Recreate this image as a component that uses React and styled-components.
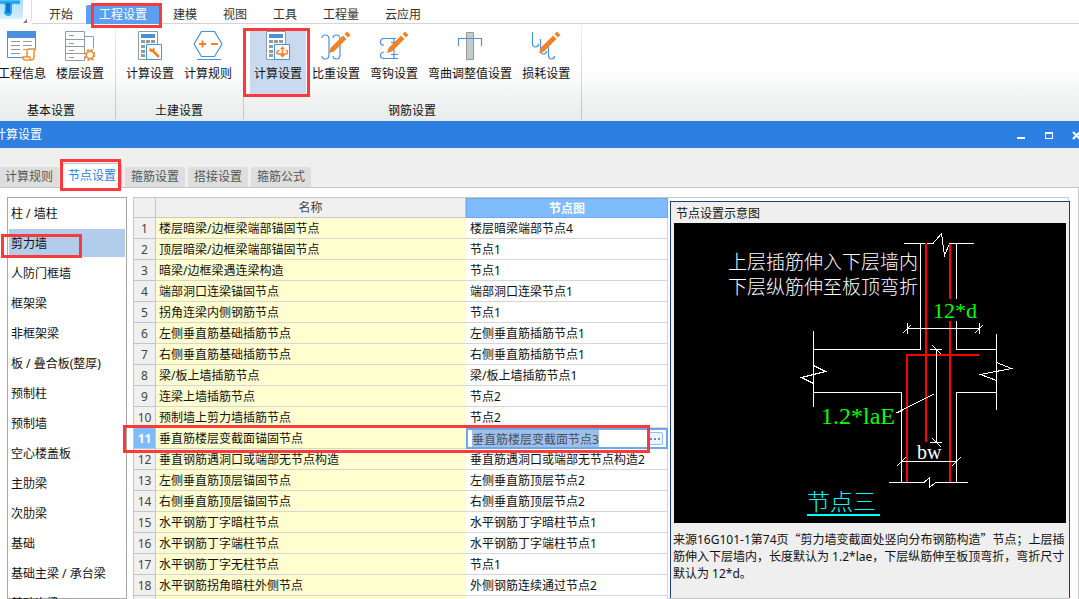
import React, { useEffect, useRef } from "react";
import styled, { createGlobalStyle, css } from "styled-components";

const Color = {
  blue: "#2d7fe1",
  tabBlue: "#5b9ff0",
  iconBlue: "#4a90dc",
  headBlue: "#80bbfb",
  headLine: "#6ba9e8",
  orange: "#f08228",
  grey: "#8f9ba0",
  line: "#c6c6c6",
  cellLine: "#d6d6d6",
  panel: "#efefef",
  red: "#fb3b3b",
  text: "#111",
};

const GlobalStyle = createGlobalStyle`
  * { box-sizing: border-box; }
  body {
    margin: 0;
    background: #fff;
    color: ${Color.text};
    font: 12px/16px "Noto Sans", "Noto Sans CJK SC", sans-serif;
  }
  button, input {
    margin: 0;
    padding: 0;
    border: 0;
    background: none;
    color: inherit;
    font: inherit;
  }
`;

const Shell = styled.div`
  display: flex;
  flex-direction: column;
  height: 100vh;
  overflow: hidden;
`;

/* red frame drawn around a step of the tutorial */
const Mark = styled.span`
  position: absolute;
  z-index: 3;
  top: ${(p) => p.$top}px;
  left: ${(p) => p.$left}px;
  width: ${(p) => p.$width}px;
  height: ${(p) => p.$height}px;
  border: 3px solid ${Color.red};
  pointer-events: none;
`;

/* ---------- ribbon ---------- */

const MenuBar = styled.div`
  display: flex;
  flex: none;
  height: 24px;
`;

const Logo = styled.div`
  flex: none;
  width: 32px;
  height: 24px;
  border-right: 1px solid #dcdcdc;
  border-bottom-right-radius: 6px;
`;

const MenuTabs = styled.nav`
  display: flex;
  flex: 1;
  padding-left: 4px;
  border-bottom: 1px solid #d3d6d8;
`;

const MenuTab = styled.button`
  position: relative;
  height: 19px;
  margin-top: 5px;
  padding: 0 13px;
  border-radius: 2px 2px 0 0;
  color: #333;
  line-height: 19px;
  ${(p) =>
    p.$active &&
    css`
      background: ${Color.tabBlue};
      color: #fff;
    `}
`;

const Ribbon = styled.div`
  display: flex;
  flex: none;
  height: 97px;
  padding: 2px 0;
  margin-left: -12px;
  background: linear-gradient(#fff 45%, #e7ebeb);
`;

const RibbonGroup = styled.section`
  display: flex;
  flex-direction: column;
  justify-content: space-between;
  padding: 5px 6px 0 5px;
  border-right: 1px solid;
  border-image: linear-gradient(#eee, #bfc2c4) 1;
`;

const RibbonRow = styled.div`
  display: flex;
`;

const GroupTitle = styled.h2`
  margin: 0;
  font-size: 12px;
  font-weight: 400;
  line-height: 16px;
  text-align: center;
`;

const Tool = styled.button`
  position: relative;
  display: flex;
  flex-direction: column;
  align-items: center;
  gap: 5px;
  height: 63px;
  padding: ${(p) => (p.$active ? "0 4px" : "0 5px")};
  border: solid transparent;
  border-width: ${(p) => (p.$active ? "0 1px" : "0")};
  background: ${(p) => (p.$active ? "#c9d9f0" : "none")};
  background-clip: padding-box;
  white-space: nowrap;

  svg {
    display: block;
    width: 30px;
    height: 30px;
  }
`;

function LogoIcon() {
  return (
    <svg width="31" height="24" viewBox="0 0 31 24">
      <defs>
        <linearGradient id="logoBg" x1="0" y1="0" x2="0" y2="1">
          <stop offset="0" stopColor="#a9dcf8" />
          <stop offset="1" stopColor="#d9f1fd" />
        </linearGradient>
      </defs>
      <path d="M0 0h23v17q0 2-2 2H0z" fill="url(#logoBg)" />
      <path
        d="M0 0h20v3q-1 2-3 1q-4-1-5 1v7q0 3-3 4q-4 0-5-3q1-3 1-8q-1-2-5-1z"
        fill="#2aa5ec"
      />
      <path d="M6 3h4v10H6z" fill="#1173d2" />
      <path d="M0 0h20v1H0z" fill="#4cc6f7" />
      <path d="M27 19v4h-4z" fill="#777" />
    </svg>
  );
}

function InfoIcon() {
  return (
    <svg viewBox="0 0 30 30" fill="none">
      <path d="M.5 .5h28v17M.5 .5v26h16" stroke={Color.iconBlue} />
      <path d="M0 0h29v7H0z" fill={Color.iconBlue} />
      <path
        d="M4 10.500h9M16 10.500h9M4 14.500h9M16 14.500h9M4 18.500h9M4 22.500h9M16 18.500h3"
        stroke={Color.grey}
      />
      <path
        d="M20 26V20q0-2 2-2h7q-2 1-2 3v5q0 3-3 3h-6q-2 0-2-3h7q0 3 2 3"
        fill="#fff"
        stroke="#e8943a"
        strokeWidth="1.500"
      />
    </svg>
  );
}

function FloorIcon() {
  return (
    <svg viewBox="0 0 30 30" fill="none">
      <path
        d="M.5 .5h19v29H.5zM.5 8.500h19M.5 15.500h19M.5 22.500h19M19.500 5.500h9v12M4 4.500h5M4 12.500h5M4 19.500h5M4 26.500h5"
        stroke={Color.grey}
      />
      <circle cx="25" cy="24" r="6" fill="#fff" />
      <circle
        cx="25"
        cy="24"
        r="5"
        stroke="#e8943a"
        strokeWidth="2"
        strokeDasharray="2.400 1.527"
      />
      <circle cx="25" cy="24" r="3.600" stroke="#e8943a" strokeWidth="1.600" />
    </svg>
  );
}

function CalculatorIcon({ children }) {
  return (
    <svg viewBox="0 0 30 30" fill="none">
      <path d="M3.500 .5h19v28h-19z" fill="#fff" stroke={Color.grey} />
      <path d="M6 3h14v4H6z" fill={Color.iconBlue} />
      <path
        d="M6 9h4v3H6zM11 9h4v3h-4zM16 9h4v3h-4zM6 14h4v3H6zM11 14h4v3h-4zM6 19h4v3H6zM6 23h4v3H6z"
        fill={Color.grey}
      />
      <path d="M11.500 13.500h15v15h-15z" fill="#fff" stroke={Color.iconBlue} />
      {children}
    </svg>
  );
}

function Wrench() {
  return (
    <>
      <path d="M17 19l7 7" stroke={Color.orange} strokeWidth="2.500" />
      <path
        d="M15 16.500l2 2 2-2q1.500 2 0 3.500t-4 .5q-1.500-2 0-4"
        fill={Color.orange}
      />
    </>
  );
}

function RebarSign() {
  return (
    <path
      d="M19.500 15.500v11M17.500 17.500h4M17.500 24.500h4M16.500 19.500q-2.500 0-2.500 2t2.500 1.500h6q2 0 2-2t-2-1.500"
      stroke={Color.orange}
      strokeWidth="1.500"
    />
  );
}

function RuleIcon() {
  return (
    <svg viewBox="0 0 30 30" fill="none">
      <path
        d="M8.500 .5h13l7.500 12.500-7.500 12.500h-13L1 13zM4 28.500h24"
        stroke={Color.iconBlue}
        strokeWidth="1.200"
      />
      <path d="M6 13h7M9.500 9.500v7M18 13h7" stroke={Color.orange} strokeWidth="2" />
    </svg>
  );
}

function Pencil() {
  return (
    <>
      <path d="M8 22l1.500-5L22 4.500l3.500 3.500L13 20.500z" fill={Color.orange} />
      <path d="M23.500 3l2.500-2.500 3.500 3.500L27 6.500z" fill={Color.orange} />
    </>
  );
}

function WeightIcon() {
  return (
    <svg viewBox="0 0 30 30" fill="none">
      <path
        d="M1 7q0-3 3.500-3t3.500 4v16q0 4-3.500 4T1 25M12 7q0-3 3.500-3t3.500 4v16q0 4-3.500 4T12 25"
        stroke={Color.iconBlue}
        strokeWidth="1.200"
      />
      <Pencil />
    </svg>
  );
}

function HookIcon() {
  return (
    <svg viewBox="0 0 30 30" fill="none">
      <path
        d="M17 7.500H5q-3.500 0-3.500 3.500T5 14M19 27.500H5q-3.500 0-3.500-3T5 21M10 27.500h9M15 8v19M12 11.500h7M12 23.500h7"
        stroke={Color.iconBlue}
        strokeWidth="1.200"
      />
      <Pencil />
    </svg>
  );
}

function BendIcon() {
  return (
    <svg viewBox="0 0 30 30" fill="none">
      <path d="M11.500 1.500h7v27h-7z" fill="#c3c9cc" stroke={Color.grey} />
      <path d="M3.500 15V7.500h23V15" stroke={Color.iconBlue} strokeWidth="1.200" />
    </svg>
  );
}

function LossIcon() {
  return (
    <svg viewBox="0 0 30 30" fill="none">
      <path
        d="M1.500 1v11q0 4 3 4t3-3M9.500 8v11q0 4 3 4t3-3M17.500 16v8q0 4 3 4t3-3"
        stroke={Color.iconBlue}
        strokeWidth="1.200"
      />
      <Pencil />
    </svg>
  );
}

/* ---------- dialog ---------- */

const TitleBar = styled.header`
  display: flex;
  flex: none;
  align-items: center;
  justify-content: space-between;
  height: 27px;
  background: ${Color.blue};
  color: #fff;
`;

const DialogTitle = styled.h1`
  margin: 0 0 0 -6px;
  font-size: 12px;
  font-weight: 400;
  line-height: 16px;
`;

const WindowButtons = styled.div`
  display: flex;
  gap: 12px;
  margin-right: -6px;

  button {
    width: 16px;
    height: 17px;
  }
  svg {
    display: block;
  }
`;

const DialogTabs = styled.nav`
  display: flex;
  flex: none;
  align-items: flex-end;
  gap: 3px;
  height: 40px;
  padding-right: 8px;
  border-bottom: 1px solid ${Color.line};
  background: ${Color.panel};
`;

const DialogTab = styled.button`
  position: relative;
  width: 60px;
  height: 20px;
  border-radius: 3px 3px 0 0;
  background: #dedede;
  color: #555;
  line-height: 20px;

  &:first-child {
    margin-left: -1px;
  }
  ${(p) =>
    p.$active &&
    css`
      height: 25px;
      margin-bottom: -1px;
      border: 1px solid ${Color.line};
      border-bottom: 0;
      background: #fff;
      color: ${Color.blue};
      line-height: 24px;
    `}
`;

const DialogBody = styled.main`
  display: flex;
  flex: 1;
  gap: 6px;
  min-height: 0;
  padding: 9px 9px 0 7px;
  border-right: 1px solid ${Color.line};
`;

const PartList = styled.ul`
  flex: none;
  width: 120px;
  margin: 0;
  padding: 1px;
  list-style: none;
  border: 1px solid #a9a9a9;
`;

const PartItem = styled.li`
  position: relative;
  height: 28px;
  margin-bottom: 2px;
  background: ${(p) => (p.$active ? "#b2ccec" : "none")};

  button {
    display: block;
    width: 100%;
    padding-left: 2px;
    line-height: 30px;
    text-align: left;
    white-space: nowrap;
  }
`;

const Frame = styled.div`
  display: flex;
  flex: 1;
  align-items: flex-start;
  gap: 2px;
  min-width: 0;
  border: 1px solid ${Color.line};
`;

const NodeTable = styled.table`
  flex: 1;
  width: 0;
  table-layout: fixed;
  border-collapse: separate;
  border-spacing: 0;

  .numberCol {
    width: 22px;
  }
  .nodeCol {
    width: 202px;
  }
`;

const HeadCell = styled.th`
  height: 20px;
  padding: 1px 0 0;
  border-right: 1px solid ${Color.line};
  border-bottom: 1px solid ${Color.line};
  background: #f0f0f0;
  color: #444;
  font-weight: 400;
  ${(p) =>
    p.$active &&
    css`
      border: 1px solid ${Color.headLine};
      background: ${Color.headBlue};
      color: #fff;
      font-weight: 700;
    `}
`;

const NumberCell = styled.th`
  position: relative;
  height: 21px;
  padding: 2px 0 0;
  border-right: 1px solid ${Color.line};
  border-bottom: 1px solid ${Color.line};
  background: ${(p) => (p.$active ? Color.headBlue : "#f0f0f0")};
  color: ${(p) => (p.$active ? "#fff" : "#444")};
  font-weight: ${(p) => (p.$active ? 700 : 400)};
`;

const Cell = styled.td`
  height: 21px;
  padding: 2px 3px 0;
  border-bottom: 1px solid ${Color.cellLine};
  border-right: ${(p) => (p.$yellow ? "0" : `1px solid ${Color.cellLine}`)};
  background: ${(p) => (p.$yellow ? "#ffffcf" : "#fff")};
  overflow: hidden;
  white-space: nowrap;
  ${(p) => !p.$yellow && "padding-left: 4px;"}
  ${(p) => p.$editing && "padding: 0; border: 0;"}
`;

const Editor = styled.div`
  display: flex;
  align-items: center;
  height: 21px;
  padding: 0 3px 0 4px;
  border: 2px solid ${Color.headLine};

  input {
    flex: 1;
    min-width: 0;
    height: 17px;
    color: #4a4f58;
    outline: 0;
  }
  input::selection {
    background: #9dc0ea;
    color: #4a4f58;
  }
  button {
    display: flex;
    align-items: center;
    justify-content: center;
    width: 16px;
    height: 13px;
    border: 1px solid #8fbdf0;
    border-radius: 2px;
    background: #eef5fd;
  }
`;

const Preview = styled.aside`
  flex: none;
  align-self: stretch;
  width: 400px;
  margin: 3px -2px 0 0;
  padding: 4px 2px 0;
  border: 1px solid #1c3f7c;
  border-bottom: 0;
  background: ${Color.panel};

  h3 {
    margin: 0;
    padding: 0 3px 1px;
    font-size: 12px;
    font-weight: 400;
    line-height: 16px;
  }
  svg {
    display: block;
    margin-left: 1px;
    background: #000;
  }
  p {
    margin: 7px 0 0;
    line-height: 17px;
    white-space: nowrap;
  }
  q {
    quotes: none;
    font-family: "Noto Sans CJK SC", sans-serif;
  }
`;

function NodeDrawing() {
  return (
    <svg
      width="392"
      height="300"
      viewBox="674 223 392 300"
      fill="none"
      fontFamily='"Liberation Serif", "Noto Sans CJK SC", serif'
    >
      <g stroke="#fff" shapeRendering="crispEdges">
        <path d="M904 243.500H933M949 243.500H974" />
        <path d="M933 243.500L941.500 233.500L944.500 255.500L949.500 243.500" />
        <path d="M920.500 243V349.500H813.500M956.500 243V299M956.500 321V349.500H996.500" />
        <path d="M813.500 331V365.500L825.500 371.500L801.500 377.500L813.500 383.500V407M813.500 365V384" />
        <path d="M996.500 334V362.500L1011.500 368.500L980.500 374.500L996.500 380.500V410M996.500 362V381" />
        <path d="M813.500 392.500H901.500V482.500M996.500 392.500H956.500V482.500" />
        <path d="M889 482.500H924L929.500 477.500V487.500L935.500 482.500H968" />
      </g>
      <g stroke="#f00" strokeWidth="2" shapeRendering="crispEdges">
        <path d="M926 243V442M950 244V299M950 321V482M907 482V355H979" />
      </g>
      <g stroke="#fff" shapeRendering="crispEdges">
        <path d="M907 328.500H980M907.500 323V334M979.500 323V334" />
        <path d="M903 333L911 325M975 333L983 325" />
        <path d="M936.500 349V442M930 349.500H942M932 345L941 354M930 442.500H942M932 438L941 447" />
        <path d="M896.500 413L934 394" />
        <path d="M901 461.500H957M897 466L906 457M952 466L961 457" />
      </g>
      <path d="M807 515H880" stroke="#0ff" strokeWidth="2" />
      <g fill="#fff" fontSize="19" fontWeight="300">
        <text x="728" y="269">上层插筋伸入下层墙内</text>
        <text x="728" y="294">下层纵筋伸至板顶弯折</text>
      </g>
      <text x="933" y="318" fill="#0f0" fontSize="22">12*d</text>
      <text x="821" y="424" fill="#0f0" fontSize="24">1.2*laE</text>
      <text x="917" y="459" fill="#fff" fontSize="20">bw</text>
      <text x="807" y="510" fill="#0ff" fontSize="23" fontWeight="300">节点三</text>
    </svg>
  );
}

const menus = ["开始", "工程设置", "建模", "视图", "工具", "工程量", "云应用"];

const groups = [
  {
    title: "基本设置",
    tools: [
      ["工程信息", <InfoIcon />],
      ["楼层设置", <FloorIcon />],
    ],
  },
  {
    title: "土建设置",
    tools: [
      ["计算设置", <CalculatorIcon><Wrench /></CalculatorIcon>],
      ["计算规则", <RuleIcon />],
    ],
  },
  {
    title: "钢筋设置",
    tools: [
      ["计算设置", <CalculatorIcon><RebarSign /></CalculatorIcon>, true],
      ["比重设置", <WeightIcon />],
      ["弯钩设置", <HookIcon />],
      ["弯曲调整值设置", <BendIcon />],
      ["损耗设置", <LossIcon />],
    ],
  },
];

const dialogTabs = ["计算规则", "节点设置", "箍筋设置", "搭接设置", "箍筋公式"];

const parts = [
  "柱 / 墙柱",
  "剪力墙",
  "人防门框墙",
  "框架梁",
  "非框架梁",
  "板 / 叠合板(整厚)",
  "预制柱",
  "预制墙",
  "空心楼盖板",
  "主肋梁",
  "次肋梁",
  "基础",
  "基础主梁 / 承台梁",
  "基础次梁",
];

const rows = [
  ["楼层暗梁/边框梁端部锚固节点", "楼层暗梁端部节点4"],
  ["顶层暗梁/边框梁端部锚固节点", "节点1"],
  ["暗梁/边框梁遇连梁构造", "节点1"],
  ["端部洞口连梁锚固节点", "端部洞口连梁节点1"],
  ["拐角连梁内侧钢筋节点", "节点1"],
  ["左侧垂直筋基础插筋节点", "左侧垂直筋插筋节点1"],
  ["右侧垂直筋基础插筋节点", "右侧垂直筋插筋节点1"],
  ["梁/板上墙插筋节点", "梁/板上墙插筋节点1"],
  ["连梁上墙插筋节点", "节点2"],
  ["预制墙上剪力墙插筋节点", "节点2"],
  ["垂直筋楼层变截面锚固节点", "垂直筋楼层变截面节点3"],
  ["垂直钢筋遇洞口或端部无节点构造", "垂直筋遇洞口或端部无节点构造2"],
  ["左侧垂直筋顶层锚固节点", "左侧垂直筋顶层节点2"],
  ["右侧垂直筋顶层锚固节点", "右侧垂直筋顶层节点2"],
  ["水平钢筋丁字暗柱节点", "水平钢筋丁字暗柱节点1"],
  ["水平钢筋丁字端柱节点", "水平钢筋丁字端柱节点1"],
  ["水平钢筋丁字无柱节点", "节点1"],
  ["水平钢筋拐角暗柱外侧节点", "外侧钢筋连续通过节点2"],
  ["", ""],
];

function NodeEditor({ value }) {
  const input = useRef(null);

  useEffect(() => {
    input.current.focus({ preventScroll: true });
    input.current.select();
  }, []);

  return (
    <Editor>
      <input ref={input} aria-label="节点图" defaultValue={value} />
      <button aria-label="选择节点">
        <svg width="10" height="2" viewBox="0 0 10 2">
          <path d="M0 0h2v2H0zM4 0h2v2H4zM8 0h2v2H8z" fill="#5b8fc8" />
        </svg>
      </button>
    </Editor>
  );
}

function App() {
  return (
    <Shell>
      <GlobalStyle />
      <MenuBar>
        <Logo>
          <LogoIcon />
        </Logo>
        <MenuTabs>
          {menus.map((name) => (
            <MenuTab key={name} $active={name === "工程设置"}>
              {name}
              {name === "工程设置" && (
                <Mark $top={-2} $left={5} $width={71} $height={25} />
              )}
            </MenuTab>
          ))}
        </MenuTabs>
      </MenuBar>
      <Ribbon>
        {groups.map((group) => (
          <RibbonGroup key={group.title}>
            <RibbonRow>
              {group.tools.map(([name, icon, active]) => (
                <Tool key={name} $active={active}>
                  {icon}
                  {name}
                  {active && (
                    <Mark $top={-3} $left={-7} $width={67} $height={69} />
                  )}
                </Tool>
              ))}
            </RibbonRow>
            <GroupTitle>{group.title}</GroupTitle>
          </RibbonGroup>
        ))}
      </Ribbon>

      <TitleBar>
        <DialogTitle>计算设置</DialogTitle>
        <WindowButtons>
          <button aria-label="最小化">
            <svg width="16" height="16">
              <path d="M4 10h8v2H4z" fill="#fff" />
            </svg>
          </button>
          <button aria-label="最大化">
            <svg width="16" height="16">
              <path d="M4 5h8v7H4zM5 7v4h6V7z" fill="#fff" fillRule="evenodd" />
            </svg>
          </button>
          <button aria-label="关闭">
            <svg width="16" height="16">
              <path d="M4 5l7 7M11 5l-7 7" stroke="#fff" strokeWidth="2" />
            </svg>
          </button>
        </WindowButtons>
      </TitleBar>
      <DialogTabs>
        {dialogTabs.map((name) => (
          <DialogTab key={name} $active={name === "节点设置"}>
            {name}
            {name === "节点设置" && (
              <Mark $top={-5} $left={-3} $width={61} $height={32} />
            )}
          </DialogTab>
        ))}
      </DialogTabs>
      <DialogBody>
        <PartList>
          {parts.map((name) => (
            <PartItem key={name} $active={name === "剪力墙"}>
              <button>{name}</button>
              {name === "剪力墙" && (
                <Mark $top={5} $left={-8} $width={81} $height={24} />
              )}
            </PartItem>
          ))}
        </PartList>
        <Frame>
          <NodeTable>
            <colgroup>
              <col className="numberCol" />
              <col />
              <col className="nodeCol" />
            </colgroup>
            <thead>
              <tr>
                <HeadCell />
                <HeadCell>名称</HeadCell>
                <HeadCell $active>节点图</HeadCell>
              </tr>
            </thead>
            <tbody>
              {rows.map(([name, node], i) => {
                const editing = i === 10;
                return (
                  <tr key={i}>
                    <NumberCell $active={editing}>
                      {i + 1}
                      {editing && (
                        <Mark $top={-3} $left={-11} $width={527} $height={28} />
                      )}
                    </NumberCell>
                    <Cell $yellow>{name}</Cell>
                    <Cell $editing={editing}>
                      {editing ? <NodeEditor value={node} /> : node}
                    </Cell>
                  </tr>
                );
              })}
            </tbody>
          </NodeTable>
          <Preview>
            <h3>节点设置示意图</h3>
            <NodeDrawing />
            <p>
              来源16G101-1第74页<q>“</q>剪力墙变截面处竖向分布钢筋构造<q>”</q>节点；上层插
              <br />
              筋伸入下层墙内，长度默认为 1.2*lae，下层纵筋伸至板顶弯折，弯折尺寸
              <br />
              默认为 12*d。
            </p>
          </Preview>
        </Frame>
      </DialogBody>
    </Shell>
  );
}

export default App;
